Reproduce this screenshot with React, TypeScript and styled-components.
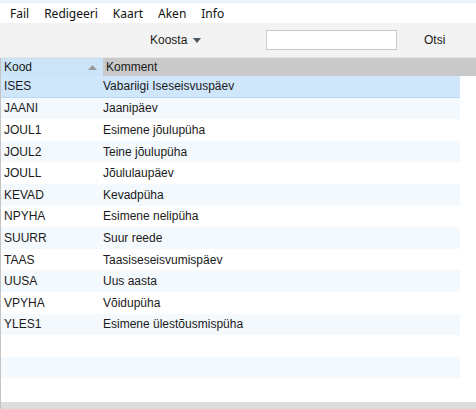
import * as React from 'react';
import styled, { createGlobalStyle } from 'styled-components';

const GlobalStyle = createGlobalStyle`
	html, body {
		margin: 0;
		padding: 0;
		background: #ffffff;
	}
	body {
		font-family: 'Liberation Sans', Arial, sans-serif;
		font-size: 12px;
		color: #1a1a1a;
	}
`;

const Window = styled.div`
	width: 476px;
	height: 409px;
	display: flex;
	flex-direction: column;
	overflow: hidden;
	border-top: 3px solid #eaf2fa;
	box-sizing: border-box;
`;

const MenuBar = styled.div`
	height: 20px;
	display: flex;
	align-items: center;
	padding-left: 10px;
	background: #ffffff;
	font-family: 'Noto Sans', 'Liberation Sans', sans-serif;
	font-size: 12px;
	color: #111;
	span {
		margin-right: 15px;
	}
`;

const Toolbar = styled.div`
	height: 35px;
	display: flex;
	align-items: center;
	background: #f3f3f3;
	border-bottom: 1px solid #e6e6e6;
	box-sizing: border-box;
`;

const Compose = styled.div`
	margin-left: 150px;
	width: 116px;
	display: flex;
	align-items: center;
	gap: 6px;
	font-size: 12px;
	svg {
		width: 8px;
		height: 5px;
		fill: #4a5560;
	}
`;

const Search = styled.div`
	width: 131px;
	height: 20px;
	background: #ffffff;
	border: 1px solid #c9c9c9;
	box-sizing: border-box;
`;

const SearchButton = styled.span`
	margin-left: 27px;
	font-size: 12px;
`;

const Body = styled.div`
	flex: 1;
	display: flex;
	flex-direction: column;
	border-left: 1px solid #c4c4c4;
`;

const HeaderRow = styled.div`
	height: 18px;
	display: flex;
	align-items: center;
`;

const HeaderCell = styled.div<{ $sorted?: boolean; $grow?: boolean }>`
	height: 100%;
	display: flex;
	align-items: center;
	justify-content: space-between;
	box-sizing: border-box;
	padding: 0 6px 0 3px;
	width: ${props => (props.$grow ? 'auto' : '102px')};
	flex: ${props => (props.$grow ? 1 : 'none')};
	background: ${props => (props.$sorted ? '#cce4f7' : '#c9c9c9')};
	svg {
		width: 9px;
		height: 5px;
		fill: #9a9a9a;
	}
`;

const Rows = styled.div`
	flex: 1;
	display: flex;
	flex-direction: column;
`;

const Row = styled.div<{ $selected?: boolean; $alt?: boolean }>`
	height: 21.6px;
	width: 459px;
	display: flex;
	align-items: center;
	box-sizing: border-box;
	background: ${props =>
		props.$selected ? '#cfe6fb' : props.$alt ? '#f4f9fe' : '#ffffff'};
	border-bottom: ${props => (props.$selected ? '1px solid #b9d6f3' : 'none')};
`;

const Cell = styled.span<{ $wide?: boolean }>`
	width: ${props => (props.$wide ? 'auto' : '101px')};
	padding-left: ${props => (props.$wide ? '1px' : '3px')};
	box-sizing: border-box;
	white-space: nowrap;
`;

const StatusBar = styled.div`
	height: 7px;
	background: #dcdcdc;
`;

const holidays: [string, string][] = [
	['ISES', 'Vabariigi Iseseisvuspäev'],
	['JAANI', 'Jaanipäev'],
	['JOUL1', 'Esimene jõulupüha'],
	['JOUL2', 'Teine jõulupüha'],
	['JOULL', 'Jõululaupäev'],
	['KEVAD', 'Kevadpüha'],
	['NPYHA', 'Esimene nelipüha'],
	['SUURR', 'Suur reede'],
	['TAAS', 'Taasiseseisvumispäev'],
	['UUSA', 'Uus aasta'],
	['VPYHA', 'Võidupüha'],
	['YLES1', 'Esimene ülestõusmispüha'],
];

const ROW_COUNT = 15;

export default function App() {
	const rows = Array.from({ length: ROW_COUNT }, (_, i) => holidays[i]);
	return (
		<>
			<GlobalStyle />
			<Window>
				<MenuBar>
					<span>Fail</span>
					<span>Redigeeri</span>
					<span>Kaart</span>
					<span>Aken</span>
					<span>Info</span>
				</MenuBar>
				<Toolbar>
					<Compose>
						<span>Koosta</span>
						<svg viewBox='0 0 8 5'><path d='M0 0 L8 0 L4 5 Z' /></svg>
					</Compose>
					<Search />
					<SearchButton>Otsi</SearchButton>
				</Toolbar>
				<Body>
					<HeaderRow>
						<HeaderCell $sorted>
							<span>Kood</span>
							<svg viewBox='0 0 9 5'><path d='M0 5 L9 5 L4.5 0 Z' /></svg>
						</HeaderCell>
						<HeaderCell $grow>
							<span>Komment</span>
						</HeaderCell>
					</HeaderRow>
					<Rows>
						{rows.map((r, i) => (
							<Row key={i} $selected={i === 0} $alt={i % 2 === 1}>
								<Cell>{r ? r[0] : ''}</Cell>
								<Cell $wide>{r ? r[1] : ''}</Cell>
							</Row>
						))}
					</Rows>
					<StatusBar />
				</Body>
			</Window>
		</>
	);
}
